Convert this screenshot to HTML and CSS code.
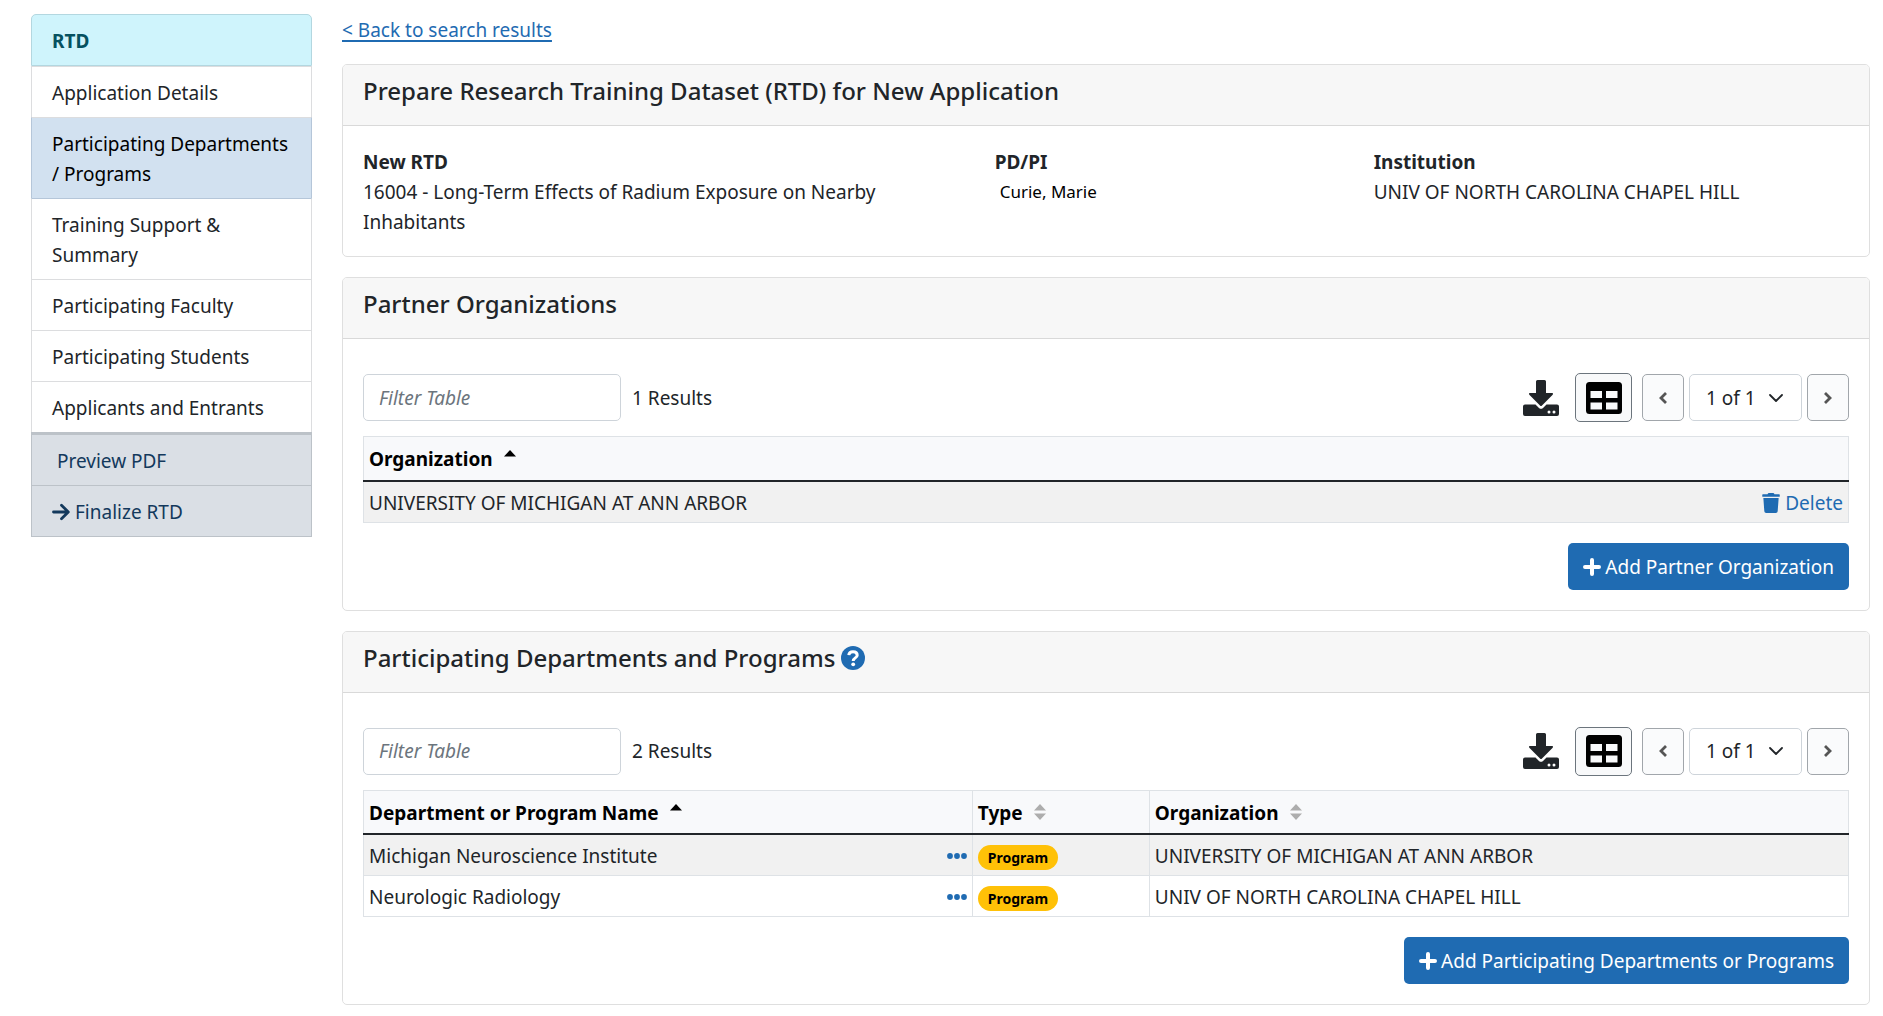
FILE: index.html
```html
<!DOCTYPE html>
<html lang="en">
<head>
<meta charset="utf-8">
<meta name="viewport" content="width=device-width, initial-scale=1">
<title>Prepare Research Training Dataset (RTD)</title>
<link rel="stylesheet" href="styles.css">
</head>
<body>
<svg class="sprite" aria-hidden="true">
  <symbol id="i-download" viewBox="0 0 36 36"><path fill="currentColor" d="M13 1.5Q13 0 14.500 0H21.500Q23 0 23 1.500V13H29.200Q30.800 13.200 29.700 14.800L19 25.500Q18 26.500 17 25.500L6.300 14.800Q5.200 13.200 6.800 13H13Z"/><path fill="currentColor" fill-rule="evenodd" d="M2 24.500H12.500L16 28Q18 29.700 20 28L23.500 24.500H34Q36 24.500 36 26.500V34Q36 36 34 36H2Q0 36 0 34V26.500Q0 24.500 2 24.500ZM26 30.500a1.500 1.500 0 1 0 0 3a1.500 1.500 0 0 0 0-3ZM31 30.500a1.500 1.500 0 1 0 0 3a1.500 1.500 0 0 0 0-3Z"/></symbol>
  <symbol id="i-table" viewBox="0 0 36 32"><path fill="currentColor" fill-rule="evenodd" d="M3.500 0H32.500Q36 0 36 3.500V28.500Q36 32 32.500 32H3.500Q0 32 0 28.500V3.500Q0 0 3.500 0ZM4.500 9V16H16V9ZM20 9V16H31.500V9ZM4.500 20.500V27.500H16V20.500ZM20 20.500V27.500H31.500V20.500Z"/></symbol>
  <symbol id="i-left" viewBox="0 0 8 12"><path fill="none" stroke="currentColor" stroke-width="2.800" d="M7 1L2 6L7 11"/></symbol>
  <symbol id="i-right" viewBox="0 0 8 12"><path fill="none" stroke="currentColor" stroke-width="2.800" d="M1 1L6 6L1 11"/></symbol>
  <symbol id="i-chevron" viewBox="0 0 14 8"><path fill="none" stroke="currentColor" stroke-width="1.800" stroke-linecap="round" stroke-linejoin="round" d="M1 1L7 7L13 1"/></symbol>
  <symbol id="i-trash" viewBox="0 0 448 512"><path fill="currentColor" d="M432 32H312l-9-19a24 24 0 0 0-22-13H167a24 24 0 0 0-22 13l-9 19H16A16 16 0 0 0 0 48v32a16 16 0 0 0 16 16h416a16 16 0 0 0 16-16V48a16 16 0 0 0-16-16ZM28 128l25 339a48 48 0 0 0 48 45h246a48 48 0 0 0 48-45l25-339Z"/></symbol>
  <symbol id="i-plus" viewBox="0 0 18 18"><path fill="none" stroke="currentColor" stroke-width="4" stroke-linecap="round" d="M9 2V16M2 9H16"/></symbol>
  <symbol id="i-arrow" viewBox="0 0 18 18"><path fill="none" stroke="currentColor" stroke-width="2.800" stroke-linecap="round" stroke-linejoin="round" d="M1.500 9H16M9.500 2.200L16.300 9L9.500 15.800"/></symbol>
  <symbol id="i-help" viewBox="0 0 24 24"><circle cx="12" cy="12" r="12" fill="currentColor"/><path fill="none" stroke="#fff" stroke-width="3" d="M7.800 9.200C8 6.800 9.800 5.800 12 5.800C14.300 5.800 16.200 7 16.200 9.200C16.200 12 12.200 11.800 12.200 15"/><circle cx="12.200" cy="18.300" r="1.900" fill="#fff"/></symbol>
  <symbol id="i-dots" viewBox="0 0 20 6"><g fill="currentColor"><circle cx="3" cy="3" r="2.900"/><circle cx="10" cy="3" r="2.900"/><circle cx="17" cy="3" r="2.900"/></g></symbol>
  <symbol id="i-asc" viewBox="0 0 12 16"><path fill="currentColor" d="M6 0L12 6.500H0Z"/></symbol>
  <symbol id="i-sort" viewBox="0 0 12 16"><path fill="currentColor" d="M6 0L12 6.500H0ZM0 9.500H12L6 16Z"/></symbol>
</svg>

<div class="page">
  <nav class="side" aria-label="RTD">
    <div class="side-title">RTD</div>
    <a class="side-item" href="#">Application Details</a>
    <a class="side-item active" href="#" aria-current="page">Participating Departments / Programs</a>
    <a class="side-item" href="#">Training Support &amp; Summary</a>
    <a class="side-item" href="#">Participating Faculty</a>
    <a class="side-item" href="#">Participating Students</a>
    <a class="side-item" href="#">Applicants and Entrants</a>
    <a class="side-item action first" href="#">&nbsp;Preview PDF</a>
    <a class="side-item action" href="#"><svg class="ic-arrow" aria-hidden="true"><use href="#i-arrow"/></svg> Finalize RTD</a>
  </nav>

  <main class="main">
    <a class="back" href="#">&lt; Back to search results</a>

    <section class="card">
      <h2 class="card-head">Prepare Research Training Dataset (RTD) for New Application</h2>
      <dl class="card-body info">
        <div class="wide"><dt>New RTD</dt><dd>16004 - Long-Term Effects of Radium Exposure on Nearby Inhabitants</dd></div>
        <div class="narrow"><dt>PD/PI</dt><dd class="person">Curie, Marie</dd></div>
        <div class="mid"><dt>Institution</dt><dd>UNIV OF NORTH CAROLINA CHAPEL HILL</dd></div>
      </dl>
    </section>

    <section class="card">
      <h2 class="card-head">Partner Organizations</h2>
      <div class="card-body">
        <div class="toolbar">
          <input class="filter" type="text" placeholder="Filter Table" aria-label="Filter partner organizations">
          <span class="count">1 Results</span>
          <button class="download" type="button" aria-label="Download"><svg class="ic-download"><use href="#i-download"/></svg></button>
          <button class="view" type="button" aria-label="Table columns"><svg class="ic-table"><use href="#i-table"/></svg></button>
          <div class="pager">
            <button class="step" type="button" aria-label="Previous page"><svg class="ic-step"><use href="#i-left"/></svg></button>
            <div class="pick"><select aria-label="Page"><option>1 of 1</option></select><svg class="ic-chevron" aria-hidden="true"><use href="#i-chevron"/></svg></div>
            <button class="step" type="button" aria-label="Next page"><svg class="ic-step"><use href="#i-right"/></svg></button>
          </div>
        </div>
        <table class="grid">
          <thead><tr><th scope="col"><button class="sort" type="button">Organization<svg class="ic-sort on"><use href="#i-asc"/></svg></button></th></tr></thead>
          <tbody><tr><td><div class="cell"><span>UNIVERSITY OF MICHIGAN AT ANN ARBOR</span><a class="delete" href="#"><svg class="ic-trash" aria-hidden="true"><use href="#i-trash"/></svg>Delete</a></div></td></tr></tbody>
        </table>
        <div class="foot"><button class="primary" type="button"><svg class="ic-plus" aria-hidden="true"><use href="#i-plus"/></svg>Add Partner Organization</button></div>
      </div>
    </section>

    <section class="card">
      <h2 class="card-head">Participating Departments and Programs <button class="help" type="button" aria-label="Help"><svg class="ic-help"><use href="#i-help"/></svg></button></h2>
      <div class="card-body">
        <div class="toolbar">
          <input class="filter" type="text" placeholder="Filter Table" aria-label="Filter departments and programs">
          <span class="count">2 Results</span>
          <button class="download" type="button" aria-label="Download"><svg class="ic-download"><use href="#i-download"/></svg></button>
          <button class="view" type="button" aria-label="Table columns"><svg class="ic-table"><use href="#i-table"/></svg></button>
          <div class="pager">
            <button class="step" type="button" aria-label="Previous page"><svg class="ic-step"><use href="#i-left"/></svg></button>
            <div class="pick"><select aria-label="Page"><option>1 of 1</option></select><svg class="ic-chevron" aria-hidden="true"><use href="#i-chevron"/></svg></div>
            <button class="step" type="button" aria-label="Next page"><svg class="ic-step"><use href="#i-right"/></svg></button>
          </div>
        </div>
        <table class="grid">
          <colgroup><col class="col-name"><col class="col-type"><col></colgroup>
          <thead><tr>
            <th scope="col"><button class="sort" type="button">Department or Program Name<svg class="ic-sort on"><use href="#i-asc"/></svg></button></th>
            <th scope="col"><button class="sort" type="button">Type<svg class="ic-sort"><use href="#i-sort"/></svg></button></th>
            <th scope="col"><button class="sort" type="button">Organization<svg class="ic-sort"><use href="#i-sort"/></svg></button></th>
          </tr></thead>
          <tbody>
            <tr><td><div class="cell"><span>Michigan Neuroscience Institute</span><button class="more" type="button" aria-label="More actions"><svg class="ic-dots"><use href="#i-dots"/></svg></button></div></td><td><span class="badge">Program</span></td><td>UNIVERSITY OF MICHIGAN AT ANN ARBOR</td></tr>
            <tr><td><div class="cell"><span>Neurologic Radiology</span><button class="more" type="button" aria-label="More actions"><svg class="ic-dots"><use href="#i-dots"/></svg></button></div></td><td><span class="badge">Program</span></td><td>UNIV OF NORTH CAROLINA CHAPEL HILL</td></tr>
          </tbody>
        </table>
        <div class="foot"><button class="primary" type="button"><svg class="ic-plus" aria-hidden="true"><use href="#i-plus"/></svg>Add Participating Departments or Programs</button></div>
      </div>
    </section>
  </main>
</div>
</body>
</html>
```
FILE: styles.css
```css
* { box-sizing: border-box; }

body {
  margin: 0;
  background: #fff;
  color: #212529;
  font: 19px/30px "Segoe UI", "Noto Sans", "Open Sans", sans-serif;
}

button, input, select { font: inherit; color: inherit; margin: 0; }
button { padding: 0; border: 0; background: none; cursor: pointer; }
a { color: #1f6bb2; }
svg { display: block; flex: none; }
.sprite { display: none; }

.page {
  display: grid;
  grid-template-columns: 281px minmax(0, 1fr);
  column-gap: 30px;
  align-items: start;
  padding: 14px 13px 11px 31px;
}

/* Side navigation */
.side { display: flex; flex-direction: column; }
.side-title {
  padding: 11px 20px 9px;
  border: 1px solid #b3d7e0;
  border-radius: 5px 5px 0 0;
  background: #cff4fc;
  color: #055160;
  font-weight: 700;
}
.side-item {
  padding: 11px 20px 9px;
  border: 1px solid #dcdddf;
  border-bottom: 0;
  color: #212529;
  text-decoration: none;
}
.side-item.active {
  background: #d2e1f0;
  color: #000;
  border-color: #dcdddf #b5c6d9 #b5c6d9;
  border-bottom: 0;
}
.side-item.active + .side-item { border-top-color: #b5c6d9; }
.side-item.action {
  display: flex;
  align-items: center;
  gap: 5px;
  background: #dadfe5;
  border-color: #bcc2c8;
  color: #13395c;
}
.side-item.action.first { border-top-width: 3px; }
.side-item.action:last-child { border-bottom: 1px solid #bcc2c8; }

/* Content */
.main { display: flex; flex-direction: column; gap: 20px; }
.back {
  align-self: flex-start;
  padding-top: 2px;
  line-height: 28px;
  text-underline-offset: 3px;
  text-decoration-thickness: 2px;
}

.card { border: 1px solid #dfdfdf; border-radius: 5px; overflow: hidden; }
.card-head {
  margin: 0;
  padding: 11px 20px 19px;
  border-bottom: 1px solid #d9d9d9;
  background: #f7f7f7;
  font-size: 24px;
  line-height: 30px;
  font-weight: 500;
  display: flex;
  align-items: center;
  gap: 6px;
}
.card-body { margin: 0; padding: 20px; }

.info {
  display: grid;
  grid-template-columns: repeat(12, minmax(0, 1fr));
  column-gap: 30px;
  padding: 21px 20px 19px;
}
.wide { grid-column: span 5; }
.narrow { grid-column: span 3; }
.mid { grid-column: span 4; }
dt { font-weight: 700; }
dd { margin: 0; }
.person { padding-left: 5px; font-size: 17px; color: #000; }

.toolbar { display: flex; align-items: center; padding: 14px 0; }
.filter {
  width: 258px;
  height: 47px;
  padding: 0 15px;
  border: 1px solid #ced4da;
  border-radius: 5px;
  background: #fff;
}
.filter::placeholder { color: #6c757d; font-style: italic; opacity: 1; }
.count { margin-left: 11px; margin-right: auto; }
.download { margin-right: 16px; }
.view {
  display: grid;
  place-items: center;
  width: 57px;
  height: 49px;
  margin-right: 10px;
  border: 1px solid #6c757d;
  border-radius: 5px;
  background: #f8f9fa;
  color: #000;
}
.pager { display: flex; gap: 5px; }
.step {
  display: grid;
  place-items: center;
  width: 42px;
  height: 47px;
  border: 1px solid #a1a6ab;
  border-radius: 5px;
  background: #fafbfc;
  color: #555;
}
.pick { display: grid; align-items: center; }
.pick > * { grid-area: 1 / 1; }
.pick select {
  appearance: none;
  width: 113px;
  height: 47px;
  padding: 0 16px;
  border: 1px solid #ced4da;
  border-radius: 5px;
  background: #fff;
}
.pick svg { justify-self: end; margin-right: 19px; pointer-events: none; }

.grid { width: 100%; border-collapse: collapse; table-layout: fixed; }
.col-name { width: 41%; }
.col-type { width: 177px; }
.grid th, .grid td {
  height: 41px;
  padding: 6px 5px 4px;
  border: 1px solid #dee2e6;
  text-align: left;
}
.grid th { height: 44px; background: #f8f9fb; color: #000; border-bottom: 2px solid #212529; }
.grid tbody tr:nth-child(odd) { background: #f1f1f1; }
.sort { display: flex; gap: 11px; font-weight: 700; color: #000; }
.cell { display: flex; justify-content: space-between; align-items: center; }
.delete { display: flex; align-items: center; gap: 5px; text-decoration: none; }
.more { color: #1f6bb2; }
.badge {
  display: inline-block;
  padding: 0 10px;
  border-radius: 13px;
  background: #ffc107;
  color: #000;
  font-size: 14px;
  font-weight: 700;
  line-height: 25px;
  vertical-align: middle;
}

.foot { display: flex; justify-content: flex-end; padding-top: 20px; }
.primary {
  display: flex;
  align-items: center;
  gap: 4px;
  height: 47px;
  padding: 1px 15px 0;
  border-radius: 5px;
  background: #1f6bb2;
  color: #fff;
}

/* Icon sizes */
.ic-download { width: 36px; height: 36px; color: #212529; }
.ic-table { width: 36px; height: 32px; }
.ic-step { width: 8px; height: 12px; }
.ic-chevron { width: 14px; height: 8px; }
.ic-trash { width: 18px; height: 20px; }
.ic-plus { width: 18px; height: 18px; }
.ic-arrow { width: 18px; height: 18px; }
.ic-help { width: 24px; height: 24px; color: #1f6bb2; }
.ic-dots { width: 20px; height: 6px; }
.ic-sort { width: 12px; height: 16px; margin-top: 6px; color: #adadad; }
.ic-sort.on { color: #000; }
```
